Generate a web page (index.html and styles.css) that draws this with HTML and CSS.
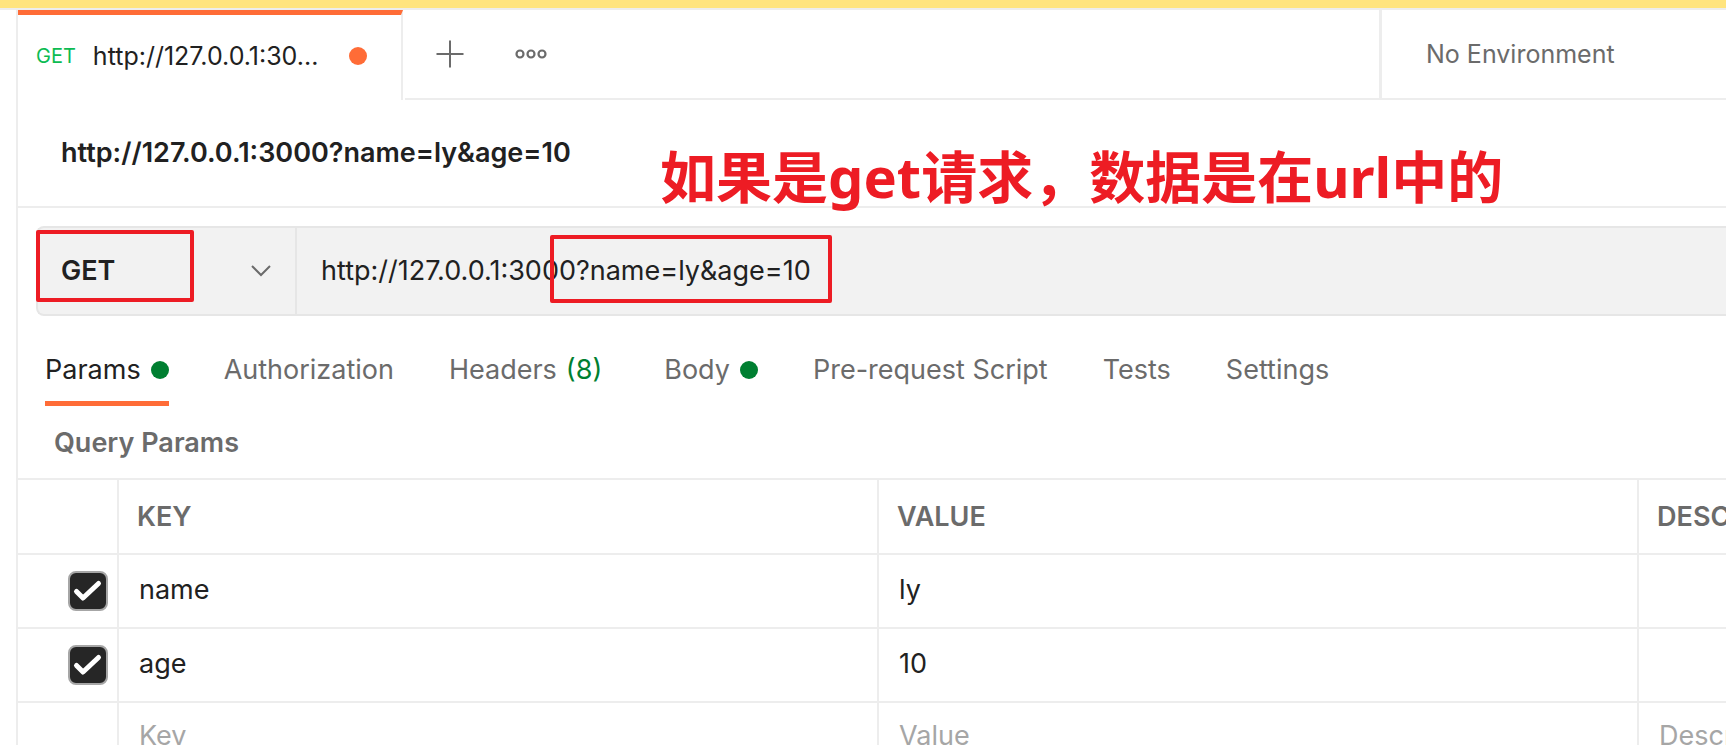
FILE: index.html
```html
<!DOCTYPE html>
<html lang="en">
<head>
<meta charset="utf-8">
<title>http://127.0.0.1:3000?name=ly&amp;age=10</title>
<link rel="stylesheet" href="styles.css">
</head>
<body>
<div class="banner"></div>
<main class="workspace">
  <header class="topbar">
    <button class="request-tab" type="button">
      <span class="tab-method">GET</span>
      <span class="tab-name">http://127.0.0.1:30...</span>
      <span class="unsaved-dot"></span>
    </button>
    <div class="tab-actions">
      <button class="icon-button" type="button" aria-label="New tab">
        <svg width="28" height="28" viewBox="0 0 28 28" fill="none" stroke="#6b6b6b" stroke-width="2"><path d="M14 0.5V27.5M0.5 14H27.5"/></svg>
      </button>
      <button class="icon-button" type="button" aria-label="Tab options">
        <svg width="32" height="10" viewBox="0 0 32 10" fill="none" stroke="#6b6b6b" stroke-width="2.200"><circle cx="5" cy="5" r="3.500"/><circle cx="16" cy="5" r="3.500"/><circle cx="27" cy="5" r="3.500"/></svg>
      </button>
    </div>
    <button class="environment" type="button">No Environment</button>
  </header>

  <section class="title-row">
    <h1 class="title">http://127.0.0.1:3000?name=ly&amp;age=10</h1>
    <p class="note" lang="zh-CN">如果是get请求，数据是在url中的</p>
  </section>

  <form class="request-bar">
    <div class="method">
      <select class="method-select" aria-label="Method"><option>GET</option></select>
      <svg class="chevron" width="20" height="12" viewBox="0 0 20 12" fill="none" stroke="#6b6b6b" stroke-width="2"><path d="M1 1L10 10L19 1"/></svg>
      <span class="mark mark-method"></span>
    </div>
    <div class="url">
      <input class="url-input" type="text" aria-label="Request URL" value="http://127.0.0.1:3000?name=ly&amp;age=10">
      <span class="mark mark-query"></span>
    </div>
  </form>

  <nav class="sections">
    <a class="section active" href="#params">Params<span class="dot"></span></a>
    <a class="section" href="#auth">Authorization</a>
    <a class="section headers" href="#headers">Headers<span class="count">(8)</span></a>
    <a class="section" href="#body">Body<span class="dot"></span></a>
    <a class="section" href="#script">Pre-request Script</a>
    <a class="section" href="#tests">Tests</a>
    <a class="section" href="#settings">Settings</a>
  </nav>

  <h2 class="subtitle" id="params">Query Params</h2>
  <table class="params">
    <colgroup><col class="col-check"><col class="col-main"><col class="col-main"><col></colgroup>
    <thead>
      <tr><th></th><th>KEY</th><th>VALUE</th><th>DESCRIPTION</th></tr>
    </thead>
    <tbody>
      <tr>
        <td class="check-cell"><input class="check" type="checkbox" checked aria-label="Use name"></td>
        <td><input class="cell" aria-label="Key 1" value="name"></td>
        <td><input class="cell" aria-label="Value 1" value="ly"></td>
        <td><input class="cell" aria-label="Description 1"></td>
      </tr>
      <tr>
        <td class="check-cell"><input class="check" type="checkbox" checked aria-label="Use age"></td>
        <td><input class="cell" aria-label="Key 2" value="age"></td>
        <td><input class="cell" aria-label="Value 2" value="10"></td>
        <td><input class="cell" aria-label="Description 2"></td>
      </tr>
      <tr class="new-row">
        <td></td>
        <td><input class="cell" aria-label="New key" placeholder="Key"></td>
        <td><input class="cell" aria-label="New value" placeholder="Value"></td>
        <td><input class="cell" aria-label="New description" placeholder="Description"></td>
      </tr>
    </tbody>
  </table>
</main>
</body>
</html>
```
FILE: styles.css
```css
:root {
  --line: #ededed;
  --text: #212121;
  --muted: #6b6b6b;
  --orange: #ff6c37;
  --green: #007f31;
  --red: #ed1c24;
}

* { box-sizing: border-box; }

body {
  margin: 0;
  height: 100vh;
  overflow: hidden;
  display: flex;
  flex-direction: column;
  background: #fff;
  color: var(--text);
  font-family: Inter, "Noto Sans CJK SC", sans-serif;
  font-size: 27px;
  line-height: 32px;
}

button, input, select {
  margin: 0;
  padding: 0;
  border: 0;
  background: none;
  color: inherit;
  font: inherit;
  outline: 0;
}

.banner {
  flex: none;
  height: 10px;
  background: #ffe47e;
  border-bottom: 2px solid var(--line);
}

.workspace {
  flex: 1;
  min-width: 0;
  margin-left: 16px;
  border-left: 2px solid var(--line);
}

.topbar {
  display: flex;
  height: 90px;
}

.request-tab {
  display: flex;
  align-items: center;
  width: 385px;
  padding: 0 34px 4px 18px;
  border-top: 5px solid var(--orange);
  border-right: 2px solid var(--line);
  font-size: 25px;
}

.tab-method {
  margin-right: 17px;
  color: #0cbb52;
  font-size: 20px;
}

.unsaved-dot {
  width: 18px;
  height: 18px;
  margin-left: auto;
  border-radius: 50%;
  background: var(--orange);
}

.tab-actions {
  flex: 1;
  display: flex;
  align-items: center;
  gap: 51px;
  margin-left: 2px;
  padding-left: 31px;
  border-bottom: 2px solid var(--line);
}

.icon-button { display: flex; }

.environment {
  width: 347px;
  padding-left: 44px;
  border-left: 3px solid var(--line);
  border-bottom: 2px solid var(--line);
  color: var(--muted);
  font-size: 25px;
  text-align: left;
}

.title-row {
  position: relative;
  height: 108px;
  padding: 37px 0 0 43px;
  border-bottom: 2px solid var(--line);
}

.title {
  margin: 0;
  font-size: 27px;
  font-weight: 600;
}

.note {
  position: absolute;
  left: 642px;
  top: 36px;
  margin: 0;
  color: var(--red);
  font: bold 56px/80px "Noto Sans", "Noto Sans CJK SC", sans-serif;
  white-space: nowrap;
}

.request-bar {
  display: flex;
  height: 90px;
  margin: 18px 0 0 18px;
  border: 2px solid #e6e6e6;
  border-right: 0;
  border-radius: 8px 0 0 8px;
  background: #f2f2f2;
}

.method {
  position: relative;
  display: flex;
  align-items: center;
  width: 259px;
  padding: 0 24px 0 23px;
  border-right: 2px solid #e6e6e6;
}

.method-select {
  flex: 1;
  appearance: none;
  font-weight: 600;
}

.chevron { pointer-events: none; }

.url {
  position: relative;
  flex: 1;
  display: flex;
  padding-left: 24px;
}

.url-input { flex: 1; }

.mark {
  position: absolute;
  border: 4px solid var(--red);
  border-radius: 2px;
  pointer-events: none;
}

.mark-method {
  left: -2px;
  top: 2px;
  width: 158px;
  height: 72px;
}

.mark-query {
  left: 253px;
  top: 7px;
  width: 282px;
  height: 68px;
}

.sections {
  display: flex;
  gap: 55px;
  height: 90px;
  padding: 38px 0 0 27px;
}

.section {
  display: flex;
  align-items: center;
  height: 52px;
  padding-bottom: 20px;
  color: var(--muted);
  text-decoration: none;
  white-space: nowrap;
}

.active {
  padding-bottom: 15px;
  border-bottom: 5px solid var(--orange);
  color: var(--text);
}

.headers { margin-right: 7px; }

.count {
  margin-left: 9px;
  color: var(--green);
}

.dot {
  width: 18px;
  height: 18px;
  margin-left: 10px;
  border-radius: 50%;
  background: var(--green);
}

.subtitle {
  margin: 0;
  padding: 21px 0 19px 36px;
  color: var(--muted);
  font-size: 27px;
  font-weight: 600;
}

.params {
  width: 100%;
  table-layout: fixed;
  border-collapse: separate;
  border-spacing: 0;
  border-top: 2px solid var(--line);
}

.col-check { width: 101px; }
.col-main { width: 44.5%; }

th, td {
  height: 74px;
  padding: 0 0 0 20px;
  border-right: 2px solid var(--line);
  border-bottom: 2px solid var(--line);
  text-align: left;
}

th {
  height: 75px;
  padding-left: 18px;
  overflow: hidden;
  color: var(--muted);
  font-weight: 600;
}

th:last-child, td:last-child { border-right: 0; }

.new-row td { height: 70px; }

.cell {
  display: block;
  width: 100%;
  padding-bottom: 2px;
}

.cell::placeholder {
  color: #a6a6a6;
  opacity: 1;
}

.check-cell { padding-left: 50px; }

.check {
  display: block;
  width: 40px;
  height: 40px;
  appearance: none;
  border: 2px solid #a6a6a6;
  border-radius: 8px;
}

.check:checked {
  background: #262626 url("data:image/svg+xml,%3Csvg xmlns='http://www.w3.org/2000/svg' viewBox='0 0 36 36'%3E%3Cpath d='M6.500 18.500L13 25L28.500 10.500' fill='none' stroke='white' stroke-width='5' stroke-linecap='round' stroke-linejoin='round'/%3E%3C/svg%3E") center / 36px 36px no-repeat;
}
```
